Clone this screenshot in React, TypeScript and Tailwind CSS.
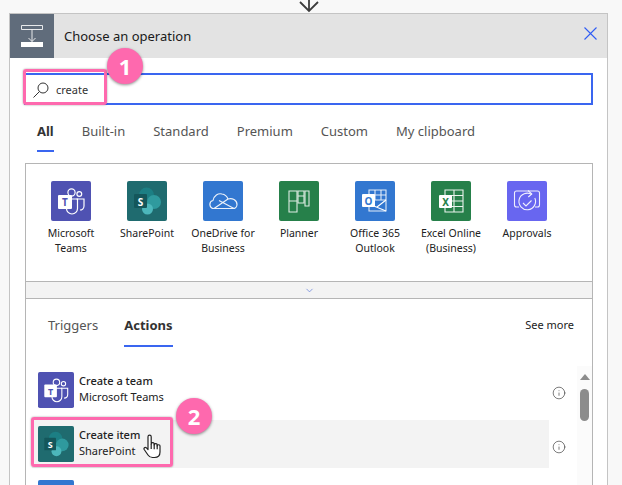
import { ChevronDown, Info } from "lucide-react";
import type { ReactNode } from "react";

const FONT = "font-['Noto_Sans','Open_Sans',sans-serif]";

function TeamsIcon() {
  return (
    <svg viewBox="0 0 40 40" className="w-full h-full">
      <rect width="40" height="40" rx="2" fill="#4f52b2" />
      <g fill="none" stroke="#fff" strokeWidth="1.2">
        <circle cx="20.5" cy="11.5" r="3.6" />
        <circle cx="28.3" cy="13" r="2.4" />
        <path d="M25.5 18h7.5v7c0 2.5-2 4-4 4" />
        <path d="M15.5 18h11v9.5a5.5 5.5 0 0 1-11 0z" />
      </g>
      <rect x="7" y="14" width="14" height="14" rx="1" fill="#fff" />
      <text x="14" y="25" fontSize="10" fontWeight="700" textAnchor="middle" fill="#4f52b2" fontFamily="Noto Sans">
        T
      </text>
    </svg>
  );
}

function SharePointIcon() {
  return (
    <svg viewBox="0 0 40 40" className="w-full h-full">
      <rect width="40" height="40" rx="2" fill="#1f6b6f" />
      <circle cx="19.5" cy="14" r="7.5" fill="#1c7f84" />
      <circle cx="27" cy="21" r="7" fill="#2f9a9e" />
      <circle cx="20.5" cy="28" r="5.5" fill="#4cb7bb" />
      <rect x="7" y="13" width="13" height="14" rx="1" fill="#14575b" />
      <text x="13.5" y="24.5" fontSize="10" fontWeight="700" textAnchor="middle" fill="#fff" fontFamily="Noto Sans">
        S
      </text>
    </svg>
  );
}

function OneDriveIcon() {
  return (
    <svg viewBox="0 0 40 40" className="w-full h-full">
      <rect width="40" height="40" rx="2" fill="#3277d0" />
      <g fill="none" stroke="#fff" strokeWidth="1.2" strokeLinejoin="round" opacity="0.9">
        <path d="M11 27.5c-5 0-5.500-7-1-8 1-5 5-7.500 9-6.500 3 .5 5 2.500 6 5 4-1.500 9 1 9 5.500 0 2.500-2 4-4 4z" />
        <path d="M11 27.500l14-9.500M16 19.500l15 8" />
      </g>
    </svg>
  );
}

function PlannerIcon() {
  return (
    <svg viewBox="0 0 40 40" className="w-full h-full">
      <rect width="40" height="40" rx="2" fill="#26804a" />
      <g fill="none" stroke="#fff" strokeWidth="1.1" opacity="0.85">
        <path d="M10 10h8v21h-8zM10 20h8" />
        <path d="M19 10h6v12h-6zM19 15h6" />
        <path d="M26 10h4v15h-4z" />
      </g>
    </svg>
  );
}

function OutlookIcon() {
  return (
    <svg viewBox="0 0 40 40" className="w-full h-full">
      <rect width="40" height="40" rx="2" fill="#3277d0" />
      <g fill="none" stroke="#fff" strokeWidth="1.1">
        <path d="M14 9h17v21H14z" opacity="0.85" />
        <path d="M20 9v10M26 9v10M14 14h17M14 19h17" opacity="0.85" />
        <path d="M14 23l17 7M31 19l-9 7" />
      </g>
      <rect x="7" y="13" width="13" height="13" rx="1" fill="#fff" />
      <text x="13.500" y="23.500" fontSize="10" fontWeight="700" textAnchor="middle" fill="#3277d0" fontFamily="Noto Sans">
        O
      </text>
    </svg>
  );
}

function ExcelIcon() {
  return (
    <svg viewBox="0 0 40 40" className="w-full h-full">
      <rect width="40" height="40" rx="2" fill="#26804a" />
      <g fill="none" stroke="#fff" strokeWidth="1.1" opacity="0.9">
        <path d="M14 9h18v22H14zM23 9v22M14 14.500h18M14 20h18M14 25.500h18" />
      </g>
      <rect x="8" y="14" width="13" height="13" rx="1" fill="#fff" />
      <text x="14.500" y="24.500" fontSize="10" fontWeight="700" textAnchor="middle" fill="#26804a" fontFamily="Noto Sans">
        X
      </text>
    </svg>
  );
}

function ApprovalsIcon() {
  return (
    <svg viewBox="0 0 40 40" className="w-full h-full">
      <rect width="40" height="40" rx="2" fill="#6866f0" />
      <g fill="none" stroke="#fff" strokeWidth="1.1" opacity="0.9">
        <path d="M12 26H9.500a2 2 0 0 1-2-2V12a2 2 0 0 1 2-2h21a2 2 0 0 1 2 2v12a2 2 0 0 1-2 2H28" />
        <path d="M27.800 17a8.300 8.300 0 1 1-3-3.500" />
        <path d="M21 9.500l3.800 3.500-3.500 3" />
        <path d="M16 22l3 3 5.500-5.500" />
      </g>
    </svg>
  );
}

function ConnectorTile({ icon, label }: { icon: ReactNode; label: string[] }) {
  return (
    <div className="w-[76px] flex flex-col items-center">
      <div className="w-10 h-10">{icon}</div>
      <div className="mt-[5px] text-[10.5px] leading-[15px] text-center text-[#222] whitespace-nowrap">
        {label.map((line) => (
          <div key={line}>{line}</div>
        ))}
      </div>
    </div>
  );
}

function ActionRow({ icon, title, sub, active }: { icon: ReactNode; title: string; sub: string; active?: boolean }) {
  return (
    <div className={`h-12 mb-[6px] pl-[6px] flex items-center ${active ? "bg-[#f3f3f3]" : ""}`}>
      <div className="w-9 h-9">{icon}</div>
      <div className="ml-[5px] -mt-[2px] text-[11px] leading-4 text-[#222]">
        <div className="font-medium">{title}</div>
        <div>{sub}</div>
      </div>
    </div>
  );
}

function Badge({ n, className }: { n: number; className: string }) {
  return (
    <div
      className={`absolute w-9 h-9 rounded-full bg-[#fe69ae] flex items-center justify-center text-white text-[22px] font-bold shadow-[0_1px_3px_rgba(0,0,0,0.45)] ${className}`}
    >
      {n}
    </div>
  );
}

const TABS = ["All", "Built-in", "Standard", "Premium", "Custom", "My clipboard"];

export default function App() {
  return (
    <div className={`relative w-[622px] h-[485px] overflow-hidden bg-[#f8f8f8] ${FONT}`}>
      <div className="h-[13px] pl-[299px]">
        <svg width="20" height="13" viewBox="0 0 20 13" fill="none" stroke="#3c3c3c" strokeWidth="1.8">
          <path d="M10 0v11M1 2l9 9 9-9" />
        </svg>
      </div>

      {/* Card */}
      <div className="ml-[9px] w-[599px] h-[480px] border border-[#c4c4c4] bg-white">
        <div className="h-11 flex items-center bg-[#e3e3e3]">
          <div className="w-11 h-11 bg-[#606c7b] flex items-center justify-center">
            <svg width="22" height="22" viewBox="0 0 22 22" fill="none" stroke="#fff" strokeWidth="1">
              <path d="M.5.5h21v4H.5zM11 4.500v12M7.500 13l3.500 3.500 3.500-3.500" opacity="0.85" />
              <rect y="17" width="22" height="5" fill="#fff" stroke="none" />
            </svg>
          </div>
          <div className="ml-[10px] mt-px text-[13px] text-[#1a1a1a]">Choose an operation</div>
          <svg width="13" height="13" viewBox="0 0 13 13" stroke="#2f5cf5" strokeWidth="1.1" className="ml-auto mr-[10px] -mt-[6px]">
            <path d="M.5.5l12 12M12.500.5l-12 12" />
          </svg>
        </div>

        <div className="mx-[14px] mt-[15px] h-[32px] border-2 border-[#3a66f0] bg-white flex items-center pl-[7px] pt-[1px]">
          <svg width="16" height="16" viewBox="0 0 16 16" fill="none" stroke="#333" strokeWidth="1">
            <circle cx="10" cy="6" r="5" />
            <path d="M6.500 9.500L.5 15.500" />
          </svg>
          <span className="ml-[7px] mt-px text-[11px] text-[#333]">create</span>
        </div>

        <div className="mx-[27px] mt-[17px] h-[31px] flex gap-[28px] text-[13px] text-[#555]">
          {TABS.map((tab, i) => (
            <div key={tab} className="relative">
              <span className={i === 0 ? "font-bold text-[#333]" : ""}>{tab}</span>
              {i === 0 && <div className="absolute left-0 right-0 top-[28px] h-[2px] bg-[#3a66f0]" />}
            </div>
          ))}
        </div>

        {/* Connector panel */}
        <div className="mx-[15px] mt-[10px] w-[568px] border border-[#b5b5b5]">
          <div className="h-[117px] pt-[17px] pl-[7px] flex">
            <ConnectorTile icon={<TeamsIcon />} label={["Microsoft", "Teams"]} />
            <ConnectorTile icon={<SharePointIcon />} label={["SharePoint"]} />
            <ConnectorTile icon={<OneDriveIcon />} label={["OneDrive for", "Business"]} />
            <ConnectorTile icon={<PlannerIcon />} label={["Planner"]} />
            <ConnectorTile icon={<OutlookIcon />} label={["Office 365", "Outlook"]} />
            <ConnectorTile icon={<ExcelIcon />} label={["Excel Online", "(Business)"]} />
            <ConnectorTile icon={<ApprovalsIcon />} label={["Approvals"]} />
          </div>
          <div className="h-[18px] bg-[#f3f3f3] border-y border-[#b5b5b5] flex items-center justify-center">
            <ChevronDown size={11} strokeWidth={1.5} className="text-[#5a78d8]" />
          </div>

          <div className="h-[200px]">
            <div className="h-[67px] flex items-start pl-[22px] pr-[18px] pt-[17px] text-[13px] text-[#555]">
              <div>Triggers</div>
              <div className="relative ml-[26px] font-bold text-[#333]">
                Actions
                <div className="absolute left-0 right-0 top-[29px] h-[2px] bg-[#3a66f0]" />
              </div>
              <div className="ml-auto mt-px text-[11px] text-[#222]">See more</div>
            </div>

            <div className="flex">
              <div className="w-[517px] ml-[6px]">
                <ActionRow icon={<TeamsIcon />} title="Create a team" sub="Microsoft Teams" />
                <ActionRow icon={<SharePointIcon />} title="Create item" sub="SharePoint" active />
                <div className="pl-[6px] pt-[6px]">
                  <div className="w-9 h-9">
                    <OneDriveIcon />
                  </div>
                </div>
              </div>
              <div className="w-3 ml-[4px] flex flex-col items-center pt-[20px] gap-[40px]">
                <Info size={14} strokeWidth={1.1} className="shrink-0 text-[#333]" />
                <Info size={14} strokeWidth={1.1} className="shrink-0 text-[#333]" />
              </div>
              <div className="w-[15px] ml-[12px] bg-[#fbfbfb] flex flex-col items-center pt-[8px]">
                <div className="w-0 h-0 border-x-[5px] border-x-transparent border-b-[6px] border-b-[#8c8c8c]" />
                <div className="mt-[9px] w-[9px] h-[32px] rounded-full bg-[#8c8c8c]" />
              </div>
            </div>
          </div>
        </div>
      </div>

      {/* Callout overlays */}
      <div className="absolute left-[23px] top-[69px] w-[84px] h-[36px] border-[3px] border-[#fe69ae] rounded-[3px] shadow-[0_0_2px_rgba(0,0,0,0.4)]" />
      <Badge n={1} className="left-[107px] top-[48px]" />
      <div className="absolute left-[31px] top-[417px] w-[142px] h-[50px] border-[3px] border-[#fe69ae] rounded-[3px] shadow-[0_0_2px_rgba(0,0,0,0.4)]" />
      <Badge n={2} className="left-[176px] top-[398px]" />
      <svg
        width="18"
        height="25"
        viewBox="0 0 18 25"
        fill="#fff"
        stroke="#222"
        strokeWidth="1.200"
        strokeLinejoin="round"
        className="absolute left-[143px] top-[434px]"
      >
        <path d="M5 14V2.800a1.600 1.600 0 0 1 3.200 0V10a1.500 1.500 0 0 1 3 .3v.7a1.500 1.500 0 0 1 3 .3v.7a1.400 1.400 0 0 1 2.800.3v5.700c0 3.500-2 5.500-5.500 5.500H9.500c-2.500 0-3.500-1-4.500-2.500L1.200 15.500c-.8-1.300.8-2.800 2-1.800L5 15.500z" />
        <path d="M8.200 10v5M11.200 10.300v5M14.200 11.300v4" fill="none" />
      </svg>
    </div>
  );
}
